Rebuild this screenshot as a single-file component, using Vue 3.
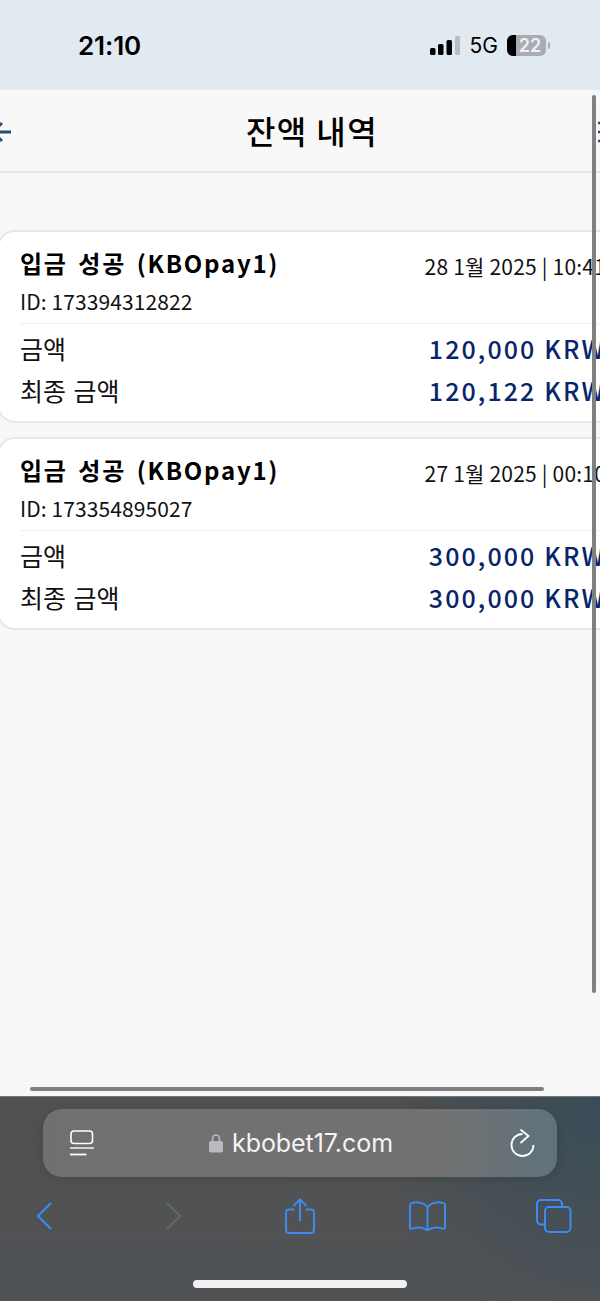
<template>
  <div class="screen">
    <div class="status">
      <span class="time">21:10</span>
      <div class="status-right">
        <svg class="signal" width="30" height="19" viewBox="0 0 30 19">
          <rect x="0" y="12" width="5.5" height="7" rx="1.5" fill="#000" />
          <rect x="8" y="8" width="5.5" height="11" rx="1.5" fill="#000" />
          <rect x="16.5" y="4" width="5.5" height="15" rx="1.5" fill="#000" />
          <rect x="25" y="0" width="5" height="19" rx="1.5" fill="#b9bdc2" />
        </svg>
        <span class="net">5G</span>
        <div class="battery">
          <div class="battery-fill"></div>
          <span class="battery-num">22</span>
        </div>
        <div class="battery-tip"></div>
      </div>
    </div>

    <div class="web">
      <header class="head">
        <svg class="back" width="22" height="22" viewBox="0 0 22 22">
          <path d="M22 11H4M13 2l-9 9 9 9" fill="none" stroke="#1f4e79" stroke-width="2.8" />
        </svg>
        <h1>잔액 내역</h1>
        <svg class="menu" width="22" height="22" viewBox="0 0 22 22">
          <path d="M2 2h18M2 11h18M2 20h18" fill="none" stroke="#1f4e79" stroke-width="2.6" />
        </svg>
      </header>

      <main class="list">
        <section v-for="item in items" :key="item.id" class="card">
          <div class="card-top">
            <div>
              <div class="title">입금 성공 (KBOpay1)</div>
              <div class="id">ID: {{ item.id }}</div>
            </div>
            <div class="date">{{ item.date }}</div>
          </div>
          <div class="row">
            <span>금액</span>
            <b>{{ item.amount }} KRW</b>
          </div>
          <div class="row">
            <span>최종 금액</span>
            <b>{{ item.total }} KRW</b>
          </div>
        </section>
      </main>
    </div>

    <div class="toolbar">
      <div class="urlbar">
        <svg width="26" height="28" viewBox="0 0 26 28" fill="none" stroke="#fff">
          <rect x="2" y="2" width="21.5" height="12.5" rx="3" stroke-width="1.6" />
          <path d="M1 19h24" stroke-width="1.4" />
          <path d="M1 25.5h16.5" stroke-width="1.8" />
        </svg>
        <div class="url">
          <svg width="14" height="20" viewBox="0 0 14 20">
            <path d="M3.5 9V5.5a3.5 3.5 0 0 1 7 0V9" fill="none" stroke="#b9b9c0" stroke-width="1.7" />
            <rect x="0" y="8" width="14" height="11.5" rx="2" fill="#b9b9c0" />
          </svg>
          <span>kbobet17.com</span>
        </div>
        <svg width="26" height="30" viewBox="0 0 26 30" fill="none" stroke="#fff" stroke-width="1.8">
          <path d="M12.5 6A11 11 0 1 0 23.5 17" />
          <path d="M10.5 1.5L18.5 8l-8 7" />
        </svg>
      </div>
      <nav class="actions">
        <svg width="18" height="30" viewBox="0 0 18 30" fill="none" stroke="#3b8bf2" stroke-width="2.2">
          <path d="M16 2L3 15l13 13" />
        </svg>
        <svg width="18" height="30" viewBox="0 0 18 30" fill="none" stroke="#63676a" stroke-width="2.2">
          <path d="M2 2l13 13L2 28" />
        </svg>
        <svg width="30" height="36" viewBox="0 0 30 36" fill="none" stroke="#3b8bf2" stroke-width="2">
          <path d="M9.5 11.5H4a3 3 0 0 0-3 3V32a3 3 0 0 0 3 3h22a3 3 0 0 0 3-3V14.5a3 3 0 0 0-3-3h-5.5" />
          <path d="M15 23V2M8.5 8L15 1.5 21.5 8" />
        </svg>
        <svg width="37" height="32" viewBox="0 0 38 32" fill="none" stroke="#3b8bf2" stroke-width="2">
          <path d="M19 7C16 2.5 9 1 3 2.5 1.800 2.800 1 3.800 1 5v22.500c0 1.500 1 2 2.500 1.500 5.500-2 11-1.500 15.500 1.500 4.500-3 10-3.500 15.500-1.500 1.500.5 2.500 0 2.500-1.500V5c0-1.200-.8-2.200-2-2.500C29 1 22 2.500 19 7z" />
          <path d="M19 7v23.5" />
        </svg>
        <svg width="36" height="34" viewBox="0 0 36 34" fill="none" stroke="#3b8bf2" stroke-width="2">
          <path d="M8 25.5H5a4 4 0 0 1-4-4V5a4 4 0 0 1 4-4h17a4 4 0 0 1 4 4v3" />
          <rect x="9" y="8" width="25.5" height="25" rx="4" />
        </svg>
      </nav>
      <div class="home-bar"></div>
    </div>

    <div class="scroll-v"></div>
    <div class="scroll-h"></div>
  </div>
</template>

<script setup>
const items = [
  { id: '173394312822', date: '28 1월 2025 | 10:41', amount: '120,000', total: '120,122' },
  { id: '173354895027', date: '27 1월 2025 | 00:10', amount: '300,000', total: '300,000' },
]
</script>

<style>
html, body {
  margin: 0;
  background: #f8f8f8;
}
</style>

<style scoped>
.screen {
  position: relative;
  display: flex;
  flex-direction: column;
  width: 600px;
  height: 1301px;
  overflow: hidden;
  background: #f8f8f8;
  font-family: "Noto Sans CJK KR", "Noto Sans", sans-serif;
  color: #000;
}

.status {
  flex: none;
  display: flex;
  align-items: center;
  justify-content: space-between;
  height: 90px;
  padding: 0 50px 0 78px;
  box-sizing: border-box;
  background: #e1e9f1;
  font-family: Inter, "Liberation Sans", sans-serif;
}
.time {
  font-size: 26px;
  font-weight: 600;
  letter-spacing: -0.1px;
}
.status-right {
  display: flex;
  align-items: center;
}
.signal {
  margin-right: 10px;
}
.net {
  font-size: 21px;
  font-weight: 400;
  margin-right: 9px;
}
.battery {
  position: relative;
  height: 21px;
  width: 39px;
  border-radius: 6px;
  overflow: hidden;
  background: #a9adb3;
}
.battery-fill {
  width: 9px;
  height: 100%;
  background: #000;
}
.battery-num {
  position: absolute;
  top: 0;
  left: 7px;
  right: 0;
  text-align: center;
  font-size: 18px;
  font-weight: 600;
  line-height: 21px;
  color: #eef1f4;
}
.battery-tip {
  width: 2px;
  height: 7px;
  margin-left: 2px;
  border-radius: 0 2px 2px 0;
  background: #a9adb3;
}

.web {
  flex: 1;
  width: 644px;
  margin-left: -11px;
  min-height: 0;
}
.head {
  display: flex;
  align-items: center;
  justify-content: space-between;
  height: 83px;
  padding: 0 15px 0 0;
  box-sizing: border-box;
  border-bottom: 2px solid #e4e6ea;
}
.back {
  margin: 3px 17px 0 0;
}
.menu {
  margin-top: 3px;
}
.head h1 {
  margin: 0;
  font-size: 32px;
  font-weight: 500;
  letter-spacing: 1.4px;
  line-height: 1.2;
}

.list {
  display: flex;
  flex-direction: column;
  gap: 14.5px;
  padding: 57px 0 0 8px;
}
.card {
  padding: 13px 25px 0 21px;
  height: 192.5px;
  box-sizing: border-box;
  background: #fff;
  border: 2px solid #e5e7ec;
  border-radius: 18px;
}
.card-top {
  display: flex;
  justify-content: space-between;
  height: 78px;
  margin-bottom: 3px;
  border-bottom: 1px solid #f0f0f2;
}
.title {
  font-size: 24px;
  font-weight: 600;
  letter-spacing: 1.75px;
  word-spacing: 3.5px;
  line-height: 36px;
}
.id {
  margin-top: 1px;
  font-size: 21px;
  letter-spacing: 0.1px;
  line-height: 38px;
  color: #111;
}
.date {
  margin-top: 5px;
  font-size: 21px;
  letter-spacing: 0.2px;
  line-height: 32px;
  color: #111;
}
.row {
  display: flex;
  justify-content: space-between;
  align-items: center;
  height: 42px;
  font-size: 25px;
  word-spacing: 2px;
  color: #111;
}
.row b {
  font-size: 25px;
  font-weight: 500;
  letter-spacing: 2.1px;
  word-spacing: 0;
  color: #08256b;
}

.toolbar {
  flex: none;
  display: flex;
  flex-direction: column;
  height: 205px;
  padding-top: 12px;
  box-sizing: border-box;
  background:
    radial-gradient(circle at 100% 6%, #3a4c57 0, rgba(58, 76, 87, 0) 36%),
    linear-gradient(#515151, #505356);
  border-top: 1px solid #777;
}
.urlbar {
  flex: none;
  display: flex;
  align-items: center;
  justify-content: space-between;
  height: 68px;
  margin: 0 43px;
  padding: 0 21px 0 26px;
  box-sizing: border-box;
  border-radius: 19px;
  background: linear-gradient(90deg, #707070 0, #727272 78%, #5f727c 100%);
  box-shadow: 0 2px 12px rgba(0, 0, 0, 0.14);
}
.url {
  display: flex;
  align-items: center;
  gap: 9px;
  margin-left: -3px;
  font-family: Inter, "Liberation Sans", sans-serif;
  font-size: 25px;
  letter-spacing: -0.05px;
  color: #f4f4f4;
}
.actions {
  display: grid;
  grid-template-columns: 128px 132px 120px 134px 120px;
  justify-items: center;
  align-items: center;
  height: 42px;
  margin: 18px 0 0 -20px;
}
.home-bar {
  width: 214px;
  height: 8px;
  margin: 43px auto 0;
  border-radius: 4px;
  background: #f0f0f0;
}

.scroll-v {
  position: absolute;
  top: 95px;
  left: 592px;
  width: 4px;
  height: 898px;
  border-radius: 2px;
  background: #808080;
}
.scroll-h {
  position: absolute;
  top: 1087px;
  left: 30px;
  width: 514px;
  height: 4px;
  border-radius: 2px;
  background: #808080;
}
</style>
